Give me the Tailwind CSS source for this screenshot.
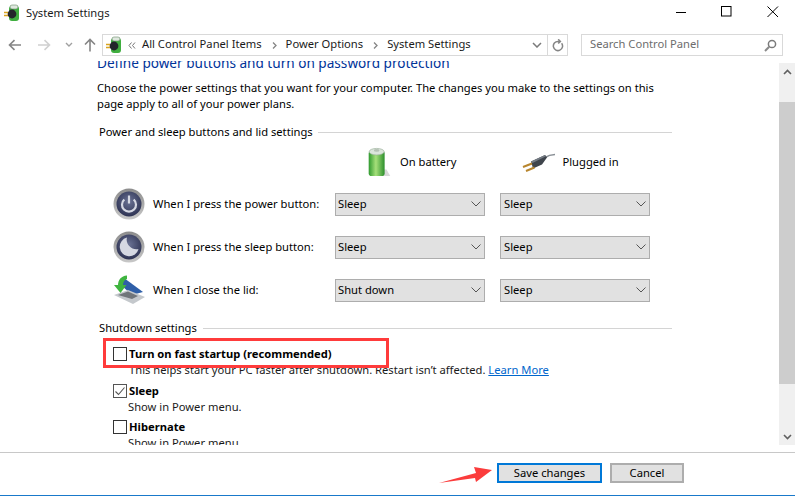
<!DOCTYPE html>
<html lang="en">
  <head>
    <meta charset="UTF-8" />
    <title>System Settings</title>
    <script src="https://cdn.jsdelivr.net/npm/@tailwindcss/browser@4"></script>
  </head>
  <body class="bg-white">
    <div class="relative w-[795px] h-[496px] overflow-hidden flex flex-col font-['Noto_Sans',sans-serif] text-[11.2px] text-black">
      <!-- title bar -->
      <div class="h-[34px] flex items-start shrink-0">
        <svg class="w-[16px] h-[18px] ml-[4px] mt-[4px]" viewBox="0 0 16 18">
          <rect x="5" y="2" width="10" height="15" rx="3" fill="#3fae3f" />
          <rect x="6" y="1" width="8" height="4" rx="2" fill="#dfe8df" stroke="#6a8a6a" stroke-width=".6" />
          <circle cx="8" cy="10" r="4.4" fill="#23262b" />
          <path d="M0 8.5h4M0 11.5h4" stroke="#d9a520" stroke-width="1.4" />
        </svg>
        <div class="ml-[6px] mt-[4px] leading-[18px] text-[#1a1a1a]">System Settings</div>
        <div class="ml-auto flex items-center mt-[6px] mr-[16px]">
          <svg class="w-[12px] h-[12px]" viewBox="0 0 12 12"><path d="M0 6.5h10" stroke="#000" stroke-width="1" /></svg>
          <svg class="w-[12px] h-[12px] ml-[33px]" viewBox="0 0 12 12"><rect x=".5" y=".5" width="9.5" height="9.5" fill="none" stroke="#000" /></svg>
          <svg class="w-[12px] h-[12px] ml-[34px]" viewBox="0 0 12 12"><path d="M.5 .5l10.5 10.5M11 .5L.5 11" stroke="#000" stroke-width="1" /></svg>
        </div>
      </div>

      <!-- nav bar -->
      <div class="h-[22px] flex items-center shrink-0">
        <svg class="w-[14px] h-[12px] ml-[8px]" viewBox="0 0 14 12"><path d="M13 6H2M6.5 1.2L1.500 6l5 4.800" fill="none" stroke="#858585" stroke-width="1.6" /></svg>
        <svg class="w-[14px] h-[12px] ml-[15px]" viewBox="0 0 14 12"><path d="M1 6h11M7.500 1.200l5 4.800-5 4.800" fill="none" stroke="#d0d0d0" stroke-width="1.6" /></svg>
        <svg class="w-[8px] h-[6px] ml-[14px]" viewBox="0 0 8 6"><path d="M1 1l3 3 3-3" fill="none" stroke="#a0a0a0" stroke-width="1.4" /></svg>
        <svg class="w-[12px] h-[14px] ml-[11px]" viewBox="0 0 12 14"><path d="M6 13.500V2M1 6.500l5-5 5 5" fill="none" stroke="#858585" stroke-width="1.6" /></svg>
        <div class="ml-[6px] w-[466px] h-[22px] border border-[#d9d9d9] flex items-center">
          <svg class="w-[16px] h-[18px] ml-[3px]" viewBox="0 0 16 18">
            <rect x="5" y="2" width="10" height="15" rx="3" fill="#3fae3f" />
            <rect x="6" y="1" width="8" height="4" rx="2" fill="#dfe8df" stroke="#6a8a6a" stroke-width=".6" />
            <circle cx="8" cy="10" r="4.4" fill="#23262b" />
            <path d="M0 8.5h4M0 11.5h4" stroke="#d9a520" stroke-width="1.4" />
          </svg>
          <svg class="w-[8px] h-[7px] ml-[6px]" viewBox="0 0 8 7"><path d="M3.500 .5L1 3.500l2.500 3M7 .5L4.500 3.500 7 6.500" fill="none" stroke="#777" /></svg>
          <span class="ml-[6px] mb-[2px] text-[#1a1a1a]">All Control Panel Items</span>
          <svg class="w-[5px] h-[7px] ml-[10px]" viewBox="0 0 5 7"><path d="M1 .5l3 3-3 3" fill="none" stroke="#858585" stroke-width="1.3" /></svg>
          <span class="ml-[9px] mb-[2px] text-[#1a1a1a]">Power Options</span>
          <svg class="w-[5px] h-[7px] ml-[10px]" viewBox="0 0 5 7"><path d="M1 .5l3 3-3 3" fill="none" stroke="#858585" stroke-width="1.3" /></svg>
          <span class="ml-[9px] mb-[2px] text-[#1a1a1a]">System Settings</span>
          <svg class="w-[10px] h-[6px] ml-auto mr-[5px]" viewBox="0 0 10 6"><path d="M1 1l4 4 4-4" fill="none" stroke="#7a7a7a" stroke-width="1.5" /></svg>
          <div class="w-[20px] h-full border-l border-[#d9d9d9] flex items-center justify-center">
            <svg class="w-[12px] h-[13px]" viewBox="0 0 12 13"><path d="M9.600 4.200A4.600 4.600 0 1 1 6 2.400H8M6.200 .3L8.400 2.400 6.200 4.500" fill="none" stroke="#858585" stroke-width="1.5" /></svg>
          </div>
        </div>
        <div class="ml-[13px] w-[202px] h-[22px] border border-[#d9d9d9] flex items-center pl-[8px] pr-[5px] text-[#6d6d6d]">
          <span class="mb-[2px]">Search Control Panel</span>
          <svg class="w-[13px] h-[13px] ml-auto" viewBox="0 0 13 13"><circle cx="8" cy="5" r="3.600" fill="none" stroke="#7a7a7a" stroke-width="1.5" /><path d="M5.200 7.800L1 12" stroke="#8a8a8a" stroke-width="2" /></svg>
        </div>
      </div>

      <!-- scrolled content and scrollbar -->
      <div class="mt-[5px] h-[384px] flex shrink-0">
        <div class="flex-1 overflow-hidden pl-[97px]">
          <h1 class="-mt-[8px] text-[13.6px] leading-[20px] text-[#003399]">Define power buttons and turn on password protection</h1>
          <p class="mt-[7px] w-[575px] leading-[16px]">Choose the power settings that you want for your computer. The changes you make to the settings on this page apply to all of your power plans.</p>

          <div class="mt-[12px] ml-[2px] w-[573px] flex items-center h-[16px]">
            <span>Power and sleep buttons and lid settings</span>
            <div class="flex-1 h-px bg-[#d4d4d4] ml-[5px]"></div>
          </div>

          <div class="mt-[3px] h-[38px] flex items-center">
            <svg class="w-[24px] h-[30px] ml-[270px]" viewBox="0 0 24 32">
              <defs>
                <linearGradient id="batt" x1="0" x2="1" y1="0" y2="0">
                  <stop offset="0" stop-color="#2f9a2f" />
                  <stop offset=".45" stop-color="#a6e07a" />
                  <stop offset="1" stop-color="#2c8f2c" />
                </linearGradient>
              </defs>
              <path d="M14 31h10l-4-7h-6z" fill="#d8d8d8" />
              <rect x="1" y="4" width="17" height="27" rx="3" fill="url(#batt)" />
              <ellipse cx="9.500" cy="5" rx="8" ry="3.500" fill="#dbe5db" stroke="#9ab09a" stroke-width=".7" />
              <ellipse cx="9.500" cy="3.600" rx="3" ry="1.500" fill="#b5c2b5" />
            </svg>
            <span class="ml-[9px]">On battery</span>
            <svg class="w-[33px] h-[19px] ml-[66px]" viewBox="0 0 33 19">
              <path d="M22 5C26 2.500 29 1.500 33 1.500" fill="none" stroke="#8a9096" stroke-width="1.600" />
              <path d="M9 8.500L23 2l2 2.500-5 7-9 4z" fill="#3f454c" />
              <path d="M9 8.500L23 2l1 1.200L10.500 10z" fill="#757c84" />
              <path d="M10 10.500L1 14M12.500 14.500L4 18" stroke="#b8862e" stroke-width="2" />
            </svg>
            <span class="ml-[7px]">Plugged in</span>
          </div>

          <div class="mt-[7px] grid grid-cols-[40px_182px_150px_165px] auto-rows-[32px] gap-y-[11px] ml-[16px] w-[540px] items-center">
            <svg class="w-[32px] h-[32px]" viewBox="0 0 32 32">
              <defs>
                <radialGradient id="knob" cx=".5" cy=".4" r=".6">
                  <stop offset="0" stop-color="#6a7294" />
                  <stop offset="1" stop-color="#2d3252" />
                </radialGradient>
                <linearGradient id="ring" x1="0" x2="0" y1="0" y2="1">
                  <stop offset="0" stop-color="#8c8c8c" />
                  <stop offset="1" stop-color="#c8c8c8" />
                </linearGradient>
              </defs>
              <circle cx="16" cy="16" r="15.500" fill="url(#ring)" />
              <circle cx="16" cy="16" r="12.500" fill="url(#knob)" />
              <path d="M11.300 11.500a7 7 0 1 0 9.400 0" fill="none" stroke="#d5d8e2" stroke-width="2.200" />
              <path d="M16 7.500v8" stroke="#d5d8e2" stroke-width="2.200" />
            </svg>
            <span>When I press the power button:</span>
            <div class="h-[23px] w-[150px] bg-[#e1e1e1] border border-[#adadad] flex items-center pl-[2px] pr-[3px]"><span>Sleep</span><svg class="ml-auto w-[10px] h-[6px]" viewBox="0 0 10 6"><path d="M.5 .5L5 5l4.500-4.500" fill="none" stroke="#555" /></svg></div>
            <div class="h-[23px] w-[150px] ml-[15px] bg-[#e1e1e1] border border-[#adadad] flex items-center pl-[3px] pr-[3px]"><span>Sleep</span><svg class="ml-auto w-[10px] h-[6px]" viewBox="0 0 10 6"><path d="M.5 .5L5 5l4.500-4.500" fill="none" stroke="#555" /></svg></div>

            <svg class="w-[32px] h-[32px]" viewBox="0 0 32 32">
              <circle cx="16" cy="16" r="15.500" fill="url(#ring)" />
              <circle cx="16" cy="16" r="12.500" fill="url(#knob)" />
              <path d="M14 6.500a9.500 9.500 0 1 0 11.500 11.500C19 20 12 13 14 6.500z" fill="#d5d8e2" />
            </svg>
            <span>When I press the sleep button:</span>
            <div class="h-[23px] w-[150px] bg-[#e1e1e1] border border-[#adadad] flex items-center pl-[2px] pr-[3px]"><span>Sleep</span><svg class="ml-auto w-[10px] h-[6px]" viewBox="0 0 10 6"><path d="M.5 .5L5 5l4.500-4.500" fill="none" stroke="#555" /></svg></div>
            <div class="h-[23px] w-[150px] ml-[15px] bg-[#e1e1e1] border border-[#adadad] flex items-center pl-[3px] pr-[3px]"><span>Sleep</span><svg class="ml-auto w-[10px] h-[6px]" viewBox="0 0 10 6"><path d="M.5 .5L5 5l4.500-4.500" fill="none" stroke="#555" /></svg></div>

            <svg class="w-[32px] h-[30px]" viewBox="0 0 32 30">
              <path d="M11 3l19 14-11 3L8 10z" fill="#2f5fa8" />
              <path d="M1 20l14-5 17 7-12 7z" fill="#c4c8cc" />
              <path d="M5 20l10-3.500 10 4.500-6 3z" fill="#70757a" />
              <path d="M14 .5C8 1 5 5 5 10H1l6.500 8 6-8H10c0-3 2-5.500 4-6z" fill="#3fb53f" />
            </svg>
            <span>When I close the lid:</span>
            <div class="h-[23px] w-[150px] bg-[#e1e1e1] border border-[#adadad] flex items-center pl-[2px] pr-[3px]"><span>Shut down</span><svg class="ml-auto w-[10px] h-[6px]" viewBox="0 0 10 6"><path d="M.5 .5L5 5l4.500-4.500" fill="none" stroke="#555" /></svg></div>
            <div class="h-[23px] w-[150px] ml-[15px] bg-[#e1e1e1] border border-[#adadad] flex items-center pl-[3px] pr-[3px]"><span>Sleep</span><svg class="ml-auto w-[10px] h-[6px]" viewBox="0 0 10 6"><path d="M.5 .5L5 5l4.500-4.500" fill="none" stroke="#555" /></svg></div>
          </div>

          <div class="mt-[14px] ml-[2px] w-[573px] flex items-center h-[16px]">
            <span>Shutdown settings</span>
            <div class="flex-1 h-px bg-[#d4d4d4] ml-[6px]"></div>
          </div>

          <div class="mt-[8px] ml-[16px] leading-[16px]">
            <div class="flex items-center h-[20px]">
              <span class="w-[14px] h-[14px] border border-[#333]"></span>
              <span class="ml-[2px] font-bold">Turn on fast startup (recommended)</span>
            </div>
            <div class="ml-[16px] -mt-[2px] text-[#1a1a1a]">This helps start your PC faster after shutdown. Restart isn’t affected. <span class="text-[#0066cc] underline">Learn More</span></div>
            <div class="flex items-center h-[20px] mt-[3px]">
              <span class="w-[14px] h-[14px] border border-[#555] flex items-center justify-center">
                <svg class="w-[10px] h-[9px]" viewBox="0 0 10 9"><path d="M.5 4.500l3 3 6-7" fill="none" stroke="#555" stroke-width="1.100" /></svg>
              </span>
              <span class="ml-[2px] font-bold">Sleep</span>
            </div>
            <div class="ml-[15px] -mt-[2px] text-[#1a1a1a]">Show in Power menu.</div>
            <div class="flex items-center h-[20px] mt-[2px]">
              <span class="w-[14px] h-[14px] border border-[#333]"></span>
              <span class="ml-[2px] font-bold">Hibernate</span>
            </div>
            <div class="ml-[15px] -mt-[2px] text-[#1a1a1a]">Show in Power menu.</div>
          </div>
        </div>

        <div class="w-[16px] mt-[2px] bg-[#f0f0f0] flex flex-col shrink-0">
          <div class="h-[39px] flex pt-[6px] justify-center">
            <svg class="w-[9px] h-[6px]" viewBox="0 0 9 6"><path d="M1 5l3.500-3.500L8 5" fill="none" stroke="#606060" stroke-width="1.600" /></svg>
          </div>
          <div class="h-[282px] bg-[#cdcdcd]"></div>
          <div class="flex-1 flex items-end justify-center pb-[5px]">
            <svg class="w-[9px] h-[6px]" viewBox="0 0 9 6"><path d="M1 1l3.500 3.500L8 1" fill="none" stroke="#606060" stroke-width="1.600" /></svg>
          </div>
        </div>
      </div>

      <!-- footer -->
      <div class="mt-[7px] flex-1 border-t border-[#c8c8c8] border-b-[1px] border-b-[#1979ca] flex items-start pl-[497px] pt-[10px]">
        <button class="w-[105px] h-[20px] border-2 border-[#0078d7] bg-[#e1e1e1] flex items-center justify-center">Save changes</button>
        <button class="w-[74px] h-[20px] ml-[8px] border-2 border-[#adadad] bg-[#e1e1e1] flex items-center justify-center">Cancel</button>
      </div>

      <!-- annotations -->
      <div class="absolute left-[103px] top-[338px] w-[286px] h-[30px] border-[3px] border-[#ff3b3b]"></div>
      <svg class="absolute left-[438px] top-[465px] w-[56px] h-[20px]" viewBox="0 0 56 20">
        <path d="M1 18L38 8 36 2 54 5 38 17 37 13z" fill="#fb3c3c" />
      </svg>
    </div>
  </body>
</html>
